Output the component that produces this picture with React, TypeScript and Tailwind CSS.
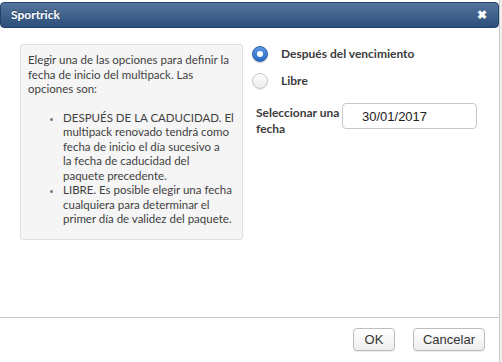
import React, { useState } from 'react';

const Radio: React.FC<{ checked: boolean; onClick: () => void }> = ({ checked, onClick }) => (
    <button
        type="button"
        onClick={onClick}
        className={
            checked
                ? 'w-[16px] h-[16px] rounded-full flex items-center justify-center bg-gradient-to-b from-[#5b9ae0] to-[#2a6bc4] border border-[#2c62ad] shadow-[0_1px_1px_rgba(0,0,0,0.2)]'
                : 'w-[16px] h-[16px] rounded-full bg-gradient-to-b from-[#ffffff] to-[#ececec] border border-[#c9c9c9] shadow-[0_1px_1px_rgba(0,0,0,0.08)]'
        }
    >
        {checked && <span className="w-[6px] h-[6px] rounded-full bg-white" />}
    </button>
);

const App: React.FC = () => {
    const [option, setOption] = useState<'after' | 'free'>('after');
    const [date, setDate] = useState('30/01/2017');

    return (
        <div className="w-[502px] h-[362px] bg-white flex overflow-hidden font-['Lato','Open_Sans',sans-serif] text-[12px] text-[#3a3a3a]">
            <div className="w-[500px] flex flex-col border-r border-[#c9c9c9]">
                <div className="mt-[2px] h-[26px] rounded-[4px] border border-[#24436b] bg-gradient-to-b from-[#55759c] to-[#2b4f7b] flex items-center justify-between pl-[10px] pr-[11px]">
                    <span className="text-white font-bold text-[12px] [text-shadow:0_-1px_0_rgba(0,0,0,0.35)]">Sportrick</span>
                    <span className="text-white font-bold text-[12px] leading-none">✖</span>
                </div>

                <div className="flex-1 flex px-[20px] pt-[16px]">
                    <div className="w-[223px] h-[196px] bg-[#f5f5f5] border border-[#e0e0e0] rounded-[3px] pl-[7px] pt-[8px] text-[11.5px] leading-[14.5px] text-[#3f3f3f] whitespace-nowrap">
                        <p>
                            Elegir una de las opciones para definir la<br />
                            fecha de inicio del multipack. Las<br />
                            opciones son:
                        </p>
                        <ul className="list-disc pl-[35px] mt-[14px] marker:text-[#777] marker:text-[10px]">
                            <li>
                                DESPUÉS DE LA CADUCIDAD. El<br />
                                multipack renovado tendrá como<br />
                                fecha de inicio el día sucesivo a<br />
                                la fecha de caducidad del<br />
                                paquete precedente.
                            </li>
                            <li>
                                LIBRE. Es posible elegir una fecha<br />
                                cualquiera para determinar el<br />
                                primer día de validez del paquete.
                            </li>
                        </ul>
                    </div>

                    <div className="ml-[9px] flex flex-col font-bold text-[#3c3c3c]">
                        <div className="h-[18px] mt-[1px] flex items-center gap-[13px]">
                            <Radio checked={option === 'after'} onClick={() => setOption('after')} />
                            <span>Después del vencimiento</span>
                        </div>
                        <div className="h-[18px] mt-[9px] flex items-center gap-[13px]">
                            <Radio checked={option === 'free'} onClick={() => setOption('free')} />
                            <span>Libre</span>
                        </div>
                        <div className="flex items-start mt-[14px] pl-[4px]">
                            <label className="w-[86px] leading-[16px] pt-[1px]">Seleccionar una fecha</label>
                            <input
                                value={date}
                                onChange={(e) => setDate(e.target.value)}
                                className="w-[135px] h-[26px] -mt-[1px] border border-[#c8c8c8] rounded-[4px] bg-white pl-[19px] font-['Liberation_Sans',sans-serif] font-normal text-[13px] text-[#222] outline-none"
                            />
                        </div>
                    </div>
                </div>

                <div className="h-[45px] border-t border-[#c4c4c4] flex justify-end items-start pt-[10px] pr-[14px] gap-[18px] font-['Liberation_Sans',sans-serif] text-[13px] text-[#333]">
                    <button className="w-[42px] h-[23px] rounded-[4px] border border-[#bdbdbd] bg-gradient-to-b from-[#ffffff] to-[#eeeeee] shadow-[0_1px_1px_rgba(0,0,0,0.08)]">
                        OK
                    </button>
                    <button className="w-[72px] h-[23px] rounded-[4px] border border-[#bdbdbd] bg-gradient-to-b from-[#ffffff] to-[#eeeeee] shadow-[0_1px_1px_rgba(0,0,0,0.08)]">
                        Cancelar
                    </button>
                </div>
            </div>
            <div className="w-[2px] bg-[#f0f0f0]" />
        </div>
    );
};

export default App;
